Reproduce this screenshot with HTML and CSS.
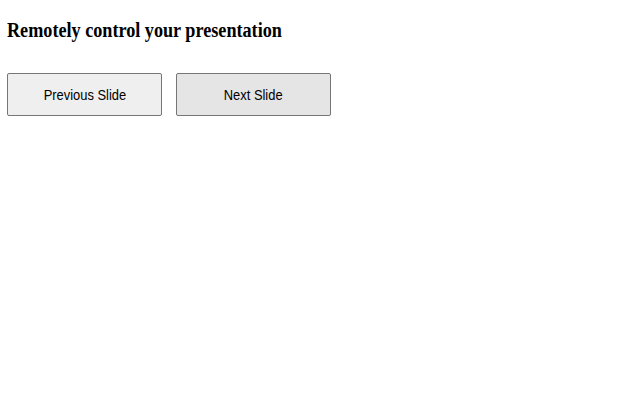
FILE: index.html
```html
<!DOCTYPE html>
<html>
<head>
<meta charset="utf-8">
<link rel="stylesheet" href="styles.css">
</head>
<body>
<h2 class="title"><span class="title-text">Remotely control your presentation</span></h2>
<div class="controls">
  <button class="btn"><span class="btn-text">Previous Slide</span></button>
  <button class="btn btn-active"><span class="btn-text">Next Slide</span></button>
</div>
</body>
</html>
```
FILE: styles.css
```css
html, body { background: #fff; }
body {
  margin: 0;
  padding: 18px 7px 0 7px;
  font-family: "Liberation Serif", "Times New Roman", serif;
  color: #000;
}
.title {
  margin: 0;
  font-size: 20px;
  font-weight: bold;
  line-height: 24px;
}
.title-text {
  display: inline-block;
  transform: scaleX(0.908);
  transform-origin: left center;
  white-space: nowrap;
}
.controls {
  display: flex;
  gap: 14px;
  margin-top: 31px;
}
.btn {
  width: 155px;
  height: 43px;
  background: #efefef;
  border: 1px solid #767676;
  border-radius: 2px;
  font-family: "Liberation Sans", Arial, sans-serif;
  font-size: 15px;
  color: #000;
  padding: 0;
}
.btn-text {
  display: inline-block;
  transform: scaleX(0.86);
  white-space: nowrap;
}
.btn-active { background: #e5e5e5; }
```
